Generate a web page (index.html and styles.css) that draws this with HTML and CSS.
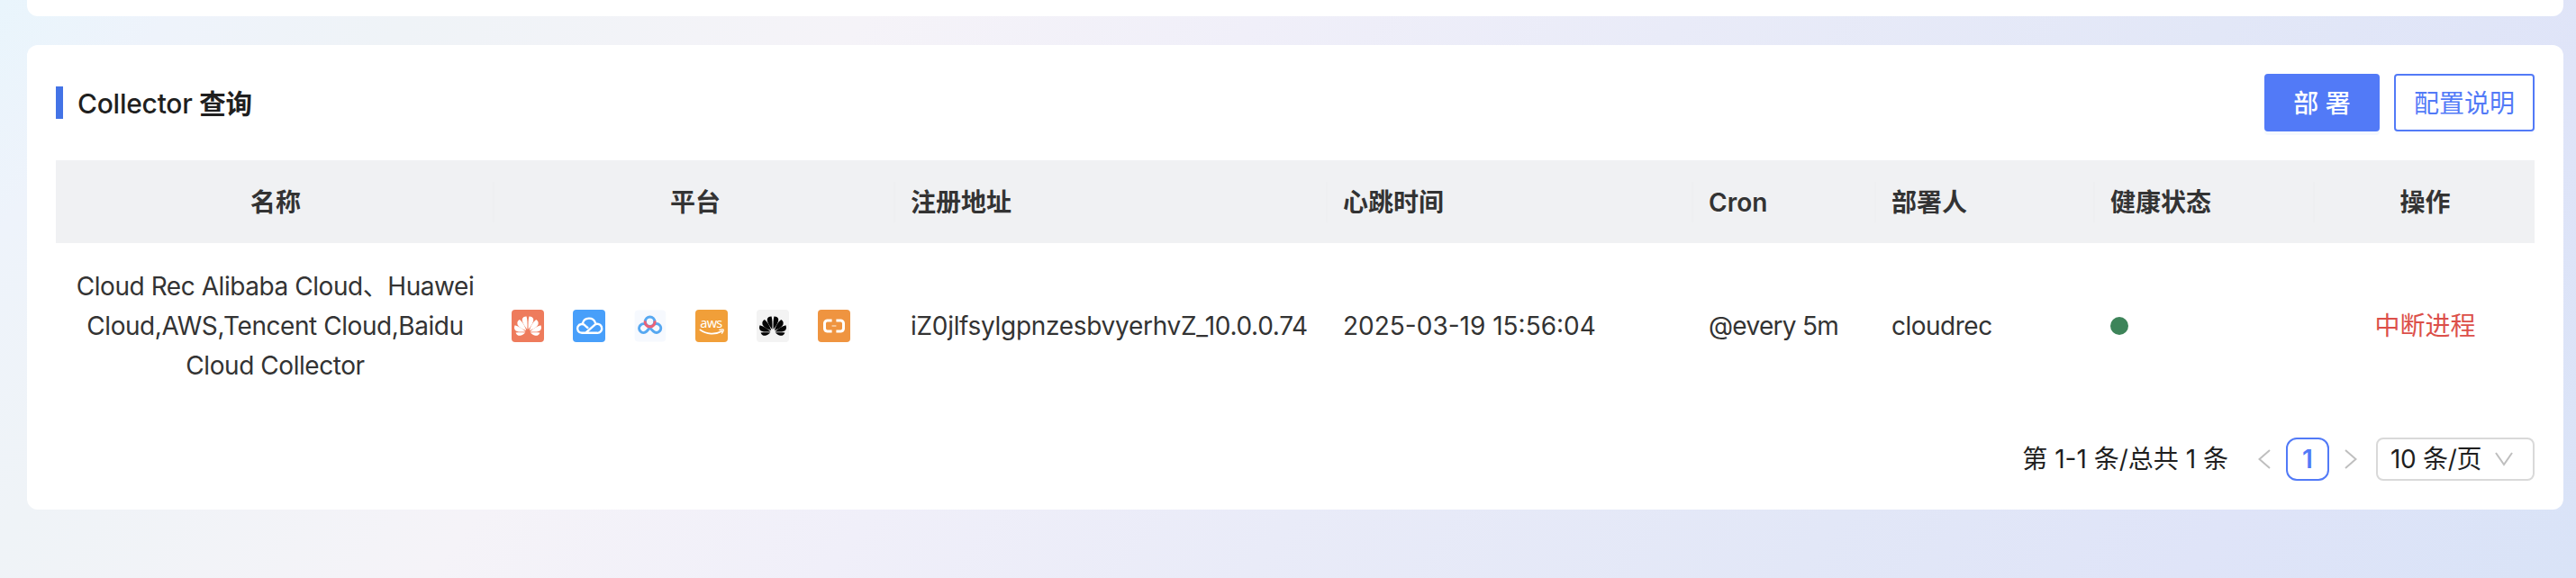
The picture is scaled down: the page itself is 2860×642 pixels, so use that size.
FILE: index.html
```html
<!DOCTYPE html>
<html lang="zh-CN">
<head>
<meta charset="utf-8">
<title>Collector</title>
<link rel="stylesheet" href="styles.css">
</head>
<body>
<svg class="defs" width="0" height="0">
  <symbol id="petals" viewBox="0 0 36 36">
    <path d="M17.4 21.8C17.6 16 17.6 11 16.6 7.4C14.2 7.2 12.2 8.4 11.8 10.4C11.4 13.6 14.4 18 17.4 21.8Z"/>
    <path d="M16.2 23C15 18.6 12.2 13.6 8.8 11C6.8 12 5.8 14 6.6 16.4C7.8 19.2 12 21.6 16.2 23Z"/>
    <path d="M15.6 24.4C12.6 21.4 8.4 18.4 3.6 17.2C2.6 19.4 2.8 22 4.8 23.4C7.6 24.8 12 24.6 15.6 24.4Z"/>
    <path d="M15.2 25.6C11.8 25.2 8 25.2 4.6 25.4C5.4 27.8 7.4 29.2 9.8 28.8C12 28.4 13.8 27 15.2 25.6Z"/>
    <path d="M18.6 21.8C18.4 16 18.4 11 19.4 7.4C21.8 7.2 23.8 8.4 24.2 10.4C24.6 13.6 21.6 18 18.6 21.8Z"/>
    <path d="M19.8 23C21 18.6 23.8 13.6 27.2 11C29.2 12 30.2 14 29.4 16.4C28.2 19.2 24 21.6 19.8 23Z"/>
    <path d="M20.4 24.4C23.4 21.4 27.6 18.4 32.4 17.2C33.4 19.4 33.2 22 31.2 23.4C28.4 24.8 24 24.6 20.4 24.4Z"/>
    <path d="M20.8 25.6C24.2 25.2 28 25.2 31.4 25.4C30.6 27.8 28.6 29.2 26.2 28.8C24 28.4 22.2 27 20.8 25.6Z"/>
  </symbol>
</svg>
<main class="page">
  <section class="card card-prev"></section>
  <section class="card card-main">
    <header class="bar">
      <h1 class="title"><span class="title-text">Collector <b>查询</b></span></h1>
      <div class="actions">
        <button class="btn btn-primary">部 署</button>
        <button class="btn btn-outline">配置说明</button>
      </div>
    </header>
    <div class="table">
      <div class="row head">
        <div class="cell center">名称</div>
        <div class="cell center">平台</div>
        <div class="cell">注册地址</div>
        <div class="cell">心跳时间</div>
        <div class="cell">Cron</div>
        <div class="cell">部署人</div>
        <div class="cell">健康状态</div>
        <div class="cell center">操作</div>
      </div>
      <div class="row data">
        <div class="cell center name">Cloud Rec Alibaba Cloud、Huawei<br>Cloud,AWS,Tencent Cloud,Baidu<br>Cloud Collector</div>
        <div class="cell platforms">
          <svg class="icon" viewBox="0 0 36 36"><rect width="36" height="36" rx="4" fill="#ee7b5c"/><use href="#petals" fill="#fff"/></svg>
          <svg class="icon" viewBox="0 0 36 36"><rect width="36" height="36" rx="4" fill="#489ffa"/><g fill="none" stroke="#fff" stroke-width="2.4" stroke-linecap="round" stroke-linejoin="round"><path d="M14 25.8L23.4 17.6A5 5 0 1 1 26.6 25.8H10A4.9 4.9 0 1 1 13.8 17.8L16.4 20"/><path d="M10.8 15.4A7.4 7.4 0 0 1 25 14.6"/></g></svg>
          <svg class="icon" viewBox="0 0 36 36"><rect x=".6" y=".6" width="34.6" height="35" rx="4" fill="#f6f9fe"/><g fill="none" stroke-width="3"><circle cx="17.6" cy="13.2" r="5.2" stroke="#56a8f1"/><path d="M17.4 20L13.8 24.2A4.9 4.9 0 1 1 13.8 17M17.4 20L21.6 24.2A4.9 4.9 0 1 0 21.4 17" stroke="#56a8f1"/><path d="M12.2 12.4A5.5 5.5 0 1 0 23 12.4" stroke="#ea6177"/></g></svg>
          <svg class="icon" viewBox="0 0 36 36"><rect width="36" height="36" rx="4" fill="#f19f39"/><text class="aws" x="17.8" y="19.6" text-anchor="middle" textLength="25" fill="#fff">aws</text><path d="M5.4 22.4C12 27.6 22.6 27.8 29.2 24" fill="none" stroke="#fff" stroke-width="1.8" stroke-linecap="round"/><path d="M26.8 22.4C29 21.8 30.8 21.6 31.2 22.2C31.4 23.2 30.6 25 29.6 26.2" fill="none" stroke="#fff" stroke-width="1.3" stroke-linecap="round"/></svg>
          <svg class="icon" viewBox="0 0 36 36"><rect width="36" height="36" rx="4" fill="#f3f3f3"/><use href="#petals" fill="#050505"/></svg>
          <svg class="icon" viewBox="0 0 36 36"><rect width="36" height="36" rx="4" fill="#ef9440"/><g fill="none" stroke="#fff" stroke-width="3"><path d="M15.6 12H10.4Q7.7 12.4 7.5 15.2V20.8Q7.7 23.6 10.4 24H15.6"/><path d="M20.4 12H25.6Q28.3 12.4 28.5 15.2V20.8Q28.3 23.6 25.6 24H20.4"/></g><path d="M15.6 18H20.4" stroke="#fbd9b8" stroke-width="1.4"/></svg>
        </div>
        <div class="cell addr">iZ0jlfsylgpnzesbvyerhvZ_10.0.0.74</div>
        <div class="cell">2025-03-19 15:56:04</div>
        <div class="cell cron">@every 5m</div>
        <div class="cell owner">cloudrec</div>
        <div class="cell"><span class="dot"></span></div>
        <div class="cell center danger">中断进程</div>
      </div>
    </div>
    <footer class="pager">
      <span class="total">第 1-1 条/总共 1 条</span>
      <svg class="prev" viewBox="0 0 14 26"><path d="M13 3L1.5 13L13 23"/></svg>
      <span class="current">1</span>
      <svg class="next" viewBox="0 0 14 26"><path d="M1 3L12.5 13L1 23"/></svg>
      <div class="size"><span class="size-text">10 条/页</span><svg class="down" viewBox="0 0 20 18"><path d="M1 2L10 15L19 2"/></svg></div>
    </footer>
  </section>
</main>
</body>
</html>
```
FILE: styles.css
```css
* { box-sizing: border-box; }
body {
  margin: 0;
  font-family: Inter, "Noto Sans CJK SC", sans-serif;
  font-size: 28px;
  line-height: 44px;
  color: #333;
}
.defs { display: block; height: 0; }
.page {
  height: 642px;
  padding: 0 14px 0 30px;
  overflow: hidden;
  background: linear-gradient(128deg, #e9f5fc 0%, #eef3fb 6%, #eff3f7 14%, #f5f3f8 29%, #f0eff9 42%, #e9ebf8 56%, #e2e7f7 74%, #dfe4f8 87%, #d9e3f7 100%);
}
.card { background: #fff; border-radius: 12px; }
.card-prev { height: 18px; border-radius: 0 0 12px 12px; }
.card-main { height: 516px; margin-top: 32px; padding: 32px; }
.bar { display: flex; justify-content: space-between; height: 64px; }
.title {
  display: flex;
  align-items: center;
  gap: 16px;
  margin: 0;
  font-size: 30px;
  font-weight: 500;
  letter-spacing: -0.25px;
  color: #1f1f1f;
}
.title b { font-weight: 600; font-size: 29.5px; }
.title::before { content: ""; width: 8px; height: 36px; background: #4373e6; }
.title-text { padding-top: 1px; }
.actions { display: flex; gap: 16px; }
.btn {
  height: 64px;
  padding: 1px 0 0;
  border-radius: 4px;
  border: 2px solid #527af7;
  font: inherit;
}
.btn-primary { width: 128px; background: #527af7; color: #fff; font-weight: 500; box-shadow: 0 4px 0 #f5f9ff; }
.btn-outline { width: 156px; background: #fff; color: #527af7; box-shadow: 0 4px 0 #fcfdff; }
.table { margin-top: 32px; }
.row { display: grid; grid-template-columns: 487px 445px 480px 406px 203px 243px 244px 244px; align-items: center; }
.head { height: 92px; background: #f0f1f3; font-weight: 600; }
.head .cell { padding-top: 1px; border-right: 2px solid #eeeff1; }
.head .center { padding-left: 19px; }
.head .cell:last-child { padding-left: 17px; border-right: 0; }
.cell { padding: 0 16px 0 17px; white-space: nowrap; }
.center { text-align: center; }
.data { height: 184px; }
.name { padding: 0; letter-spacing: -0.44px; }
.addr { letter-spacing: -0.3px; }
.cron { letter-spacing: -0.7px; }
.owner { letter-spacing: -0.5px; }
.platforms { display: flex; gap: 32px; padding-left: 19px; }
.icon { width: 36px; height: 36px; }
.aws { font: 14.5px "Noto Sans", sans-serif; }
.dot { display: block; width: 20px; height: 20px; border-radius: 50%; background: #3d8459; }
.danger { color: #dc4f49; }
.pager { display: flex; align-items: center; justify-content: flex-end; height: 48px; margin-top: 32px; color: #1f1f1f; }
.pager svg { fill: none; stroke: #bfbfbf; stroke-width: 2; }
.total { margin-right: 33px; }
.prev, .next { width: 14px; height: 26px; }
.prev { margin-right: 17px; }
.current {
  display: flex;
  align-items: center;
  justify-content: center;
  width: 48px;
  height: 48px;
  margin-right: 17px;
  border: 2px solid #527af7;
  border-radius: 12px;
  color: #527af7;
  font-weight: 600;
}
.next { margin-right: 21px; }
.size {
  display: flex;
  align-items: center;
  justify-content: space-between;
  width: 176px;
  height: 48px;
  padding: 0 22px 0 14px;
  border: 2px solid #d9d9d9;
  border-radius: 8px;
}
.size-text { letter-spacing: -0.3px; }
.down { width: 20px; height: 18px; }
```
